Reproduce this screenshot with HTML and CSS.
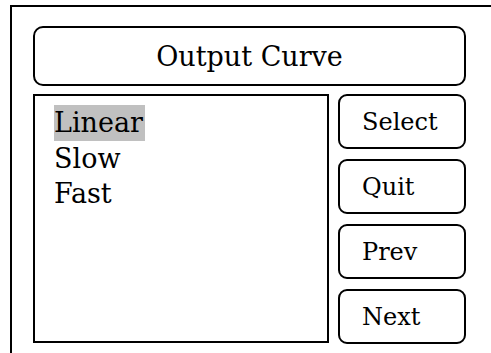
FILE: index.html
```html
<!doctype html>
<html>
<head>
<meta charset="utf-8">
<title>Output Curve</title>
<link rel="stylesheet" href="styles.css">
</head>
<body>
<div class="frame">
  <div class="title">Output Curve</div>
  <div class="main">
    <ul class="list">
      <li><span class="sel">Linear</span></li>
      <li><span>Slow</span></li>
      <li><span>Fast</span></li>
    </ul>
    <div class="buttons">
      <div class="btn">Select</div>
      <div class="btn">Quit</div>
      <div class="btn">Prev</div>
      <div class="btn">Next</div>
    </div>
  </div>
</div>
</body>
</html>
```

FILE: styles.css
```css
html, body {
	margin: 0;
	padding: 0;
	background: #fff;
	overflow: hidden;
}
body {
	font-family: "DejaVu Serif", "Liberation Serif", serif;
	color: #000;
}
.frame {
	margin: 5px 0 0 10px;
	width: 481px;
	height: 348px;
	border-top: 2px solid #000;
	border-left: 2px solid #000;
	padding: 19px 0 0 21px;
	box-sizing: border-box;
}
.title {
	width: 433px;
	height: 60px;
	box-sizing: border-box;
	border: 2px solid #000;
	border-radius: 10px;
	display: flex;
	align-items: center;
	justify-content: center;
	font-size: 27px;
	padding-top: 1px;
}
.main {
	display: flex;
	gap: 9px;
	margin-top: 8px;
}
.list {
	list-style: none;
	margin: 0;
	width: 296px;
	height: 249px;
	box-sizing: border-box;
	border: 2px solid #000;
	padding: 9px 0 0 19px;
	font-size: 27px;
	line-height: 35px;
}
.list li span {
	display: inline-block;
	line-height: 36px;
	padding-right: 2px;
}
.list li + li span {
	line-height: 35px;
}
.list .sel {
	background: #c0c0c0;
}
.buttons {
	width: 128px;
	height: 250px;
	display: flex;
	flex-direction: column;
	justify-content: space-between;
}
.btn {
	height: 55px;
	box-sizing: border-box;
	border: 2px solid #000;
	border-radius: 9px;
	display: flex;
	align-items: center;
	padding-left: 22px;
	font-size: 24px;
}
```
